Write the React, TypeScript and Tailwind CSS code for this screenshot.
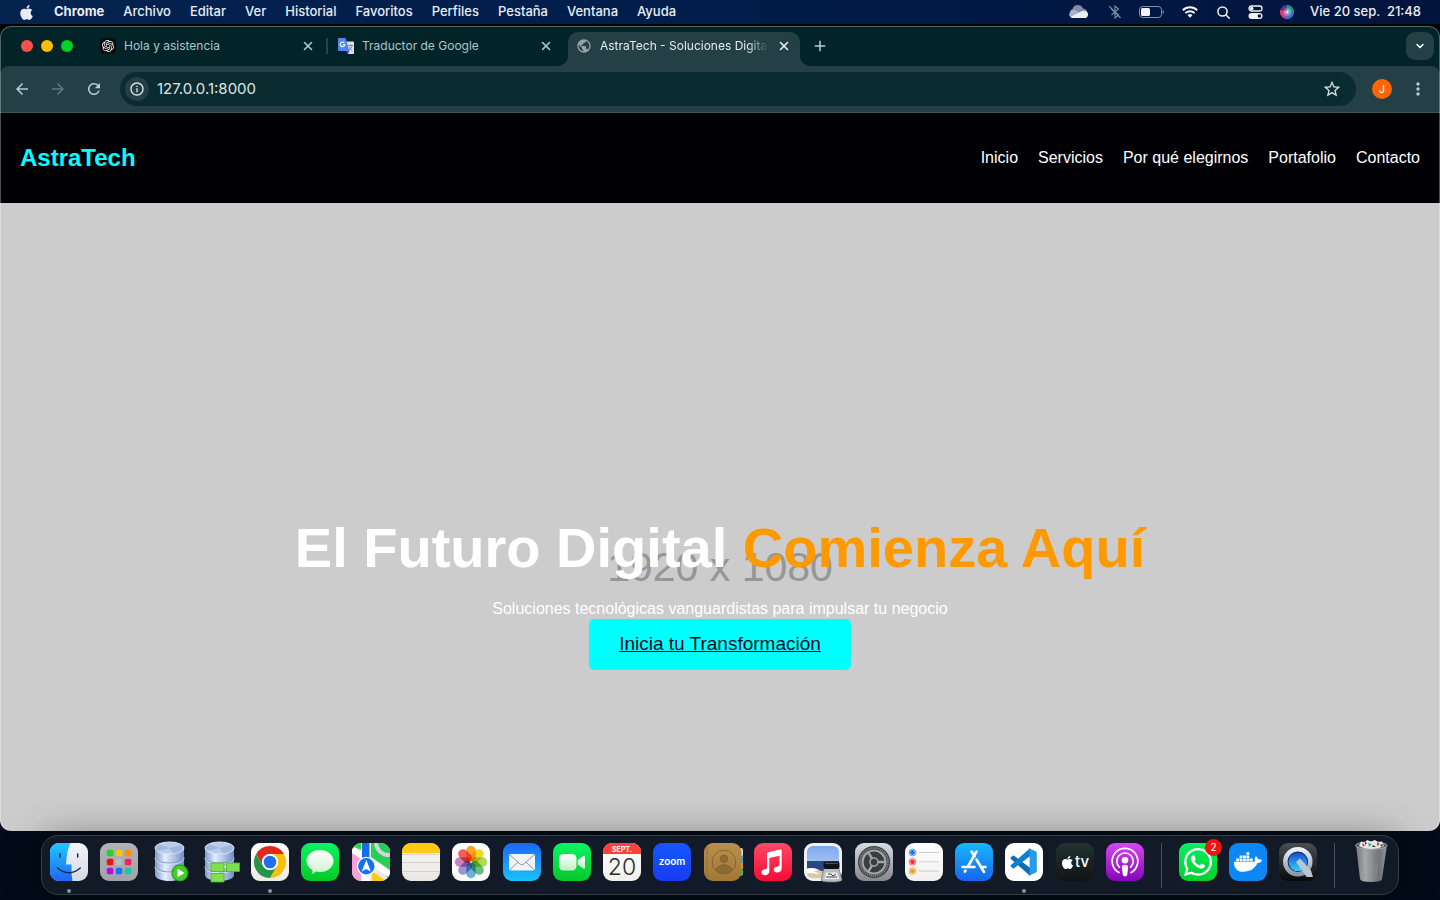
import type { ReactNode } from "react";
import { FaApple, FaDocker, FaWhatsapp } from "react-icons/fa";
import { SiOpenai } from "react-icons/si";
import { MdStarBorder, MdMoreVert, MdPublic, MdInfoOutline, MdRefresh, MdArrowBack, MdArrowForward, MdAdd } from "react-icons/md";
import { ChevronDown, X } from "lucide-react";

const menus = ["Archivo", "Editar", "Ver", "Historial", "Favoritos", "Perfiles", "Pestaña", "Ventana", "Ayuda"];
const links = ["Inicio", "Servicios", "Por qué elegirnos", "Portafolio", "Contacto"];

function MenuBar() {
  return (
    <header className="flex h-6 items-center justify-between bg-linear-to-r from-[#04234f] via-[#011c4a] to-[#02143c] pr-[19px] pl-5 text-[13px] font-medium text-[#e9edf3]">
      <div className="flex items-center gap-[19px]">
        <button aria-label="Apple" className="text-[#e9edf3]">
          <FaApple className="-ml-0.5 size-[17px]" />
        </button>
        <button className="font-bold">Chrome</button>
        {menus.map((m) => (
          <button key={m}>{m}</button>
        ))}
      </div>
      <div className="flex items-center">
        <svg viewBox="0 0 20 14" className="mr-5 h-3.5 w-5" aria-hidden="true">
          <path d="M4 11a3.6 3.6 0 0 1-.5-7A5.6 5.6 0 0 1 14 3.4 4.4 4.4 0 0 1 18 8L9 12Z" fill="#7f8ba8" />
          <path d="M1 7.5A4 4 0 0 1 5 4.800l6 3-9 4.500A3 3 0 0 1 1 7.500Z" fill="#a9b1c4" />
          <path d="M3.500 13a3 3 0 0 1-2-1l10-5.200A5 5 0 0 1 16 6a3.600 3.600 0 0 1 .5 7Z" fill="#eceef2" />
        </svg>
        <svg viewBox="0 0 12 14" className="mr-[18px] h-3.5 w-3" fill="none" stroke="#8290ab" strokeWidth="1.1" aria-hidden="true">
          <path d="m2.500 4 7 6L6 13V1l3.500 3-7 6" />
          <path d="m0 1 11.500 12" />
        </svg>
        <svg viewBox="0 0 25 12" className="mr-[18px] h-3 w-[25px]" aria-hidden="true">
          <rect x=".5" y=".5" width="22" height="11" rx="3.200" fill="none" stroke="#8290ab" />
          <rect x="2" y="2" width="9" height="8" rx="1.500" fill="#f1f3f6" />
          <path d="M23.700 4v4a2.200 2.200 0 0 0 0-4Z" fill="#8290ab" />
        </svg>
        <svg viewBox="0 0 16 12" className="mr-[19px] h-3 w-4" fill="none" stroke="#f1f3f6" strokeWidth="2" aria-hidden="true">
          <path d="M.8 4.300a10.300 10.300 0 0 1 14.400 0" />
          <path d="M3.400 7.100a6.500 6.500 0 0 1 9.200 0" />
          <path d="m8 11.800-2.400-2.500a3.400 3.400 0 0 1 4.800 0Z" fill="#f1f3f6" stroke="none" />
        </svg>
        <svg viewBox="0 0 13 13" className="mr-[18px] size-[13px]" fill="none" stroke="#f1f3f6" strokeWidth="1.500" strokeLinecap="round" aria-hidden="true">
          <circle cx="5.500" cy="5.500" r="4.600" />
          <path d="m9 9 3.300 3.300" />
        </svg>
        <svg viewBox="0 0 15 14" className="mr-[17px] h-3.5 w-[15px]" aria-hidden="true">
          <rect x="1" y="1" width="13" height="5" rx="2.500" fill="none" stroke="#f1f3f6" strokeWidth="1.300" />
          <circle cx="3.700" cy="3.500" r="1.800" fill="#f1f3f6" />
          <rect x=".5" y="8" width="14" height="6" rx="3" fill="#f1f3f6" />
          <circle cx="11.400" cy="11" r="1.800" fill="#02143c" />
        </svg>
        <svg viewBox="0 0 14 14" className="mr-4 size-3.5" aria-hidden="true">
          <defs>
            <radialGradient id="siri">
              <stop offset="0" stopColor="#fff" />
              <stop offset=".3" stopColor="#fff" stopOpacity=".5" />
              <stop offset="1" stopColor="#fff" stopOpacity="0" />
            </radialGradient>
          </defs>
          <circle cx="7" cy="7" r="7" fill="#29306a" />
          <path d="M7 7 1 3.500A7 7 0 0 1 8 0Z" fill="#503c8c" />
          <path d="M7 7 7 0a7 7 0 0 1 7 8Z" fill="#15988a" />
          <path d="M7 7 14 8A7 7 0 0 1 5 13.700Z" fill="#3d6bd0" />
          <path d="M7 7 5 13.700A7 7 0 0 1 .5 4.500Z" fill="#d93b78" />
          <circle cx="7.300" cy="7" r="5" fill="url(#siri)" />
        </svg>
        <span className="whitespace-pre">Vie 20 sep.  21:48</span>
      </div>
    </header>
  );
}

function Tab({ icon, title, active, divider }: { icon: ReactNode; title: string; active?: boolean; divider?: boolean }) {
  return (
    <div className={active ? "relative flex h-[34px] w-[232px] items-start rounded-t-[10px] bg-[#243f46] px-2 pt-1.5 text-[#e4eced]" : "relative flex h-[34px] w-[232px] items-start px-2 pt-1.5 text-[#a9c7cb]"}>
      {active && (
        <>
          <svg viewBox="0 0 10 10" className="absolute bottom-0 -left-2.5 size-2.5" aria-hidden="true">
            <path d="M10 0v10H0A10 10 0 0 0 10 0Z" fill="#243f46" />
          </svg>
          <svg viewBox="0 0 10 10" className="absolute -right-2.5 bottom-0 size-2.5" aria-hidden="true">
            <path d="M0 0v10h10A10 10 0 0 1 0 0Z" fill="#243f46" />
          </svg>
        </>
      )}
      {divider && <span className="absolute top-1.5 -right-1 h-4 w-0.5 bg-[#23444a]" />}
      <button className="flex min-w-0 flex-1 items-center gap-2 text-left text-[12px] leading-4">
        <span className="flex size-4 shrink-0 items-center justify-center">{icon}</span>
        <span className={active ? "overflow-hidden mask-r-from-88% mask-r-to-100% whitespace-nowrap" : "overflow-hidden whitespace-nowrap"}>{title}</span>
      </button>
      <button aria-label={`Cerrar ${title}`} className="ml-2 flex size-4 shrink-0 items-center justify-center">
        <X className="size-3.5" strokeWidth={2.8} />
      </button>
    </div>
  );
}

function TranslateIcon() {
  return (
    <svg viewBox="0 0 16 16" className="size-4" aria-hidden="true">
      <path d="M7 3.500h8a1 1 0 0 1 1 1V15a1 1 0 0 1-1 1H10Z" fill="#dfe2e6" />
      <path d="M8.500 13h3L10 16Z" fill="#7d3fc4" />
      <path d="M1 0h6.500l4 13H1a1 1 0 0 1-1-1V1a1 1 0 0 1 1-1Z" fill="#4d87f5" />
      <path d="M6.300 4.900A2.300 2.300 0 1 0 6.800 6.700H4.700" fill="none" stroke="#fff" strokeWidth="1.100" />
      <path d="M10 7.500h5M12.500 6.300v1.200M14 7.500c-.5 2.500-2 4-3.200 5M11 9c.8 1.800 2 3 3.500 4" fill="none" stroke="#76828c" strokeWidth=".9" />
    </svg>
  );
}

function BrowserChrome() {
  return (
    <>
      <div className="flex h-10 items-end bg-[#022428] pr-1.5 pl-[21px]">
        <div className="flex h-10 w-[71px] items-center gap-2">
          <button aria-label="Cerrar ventana" className="size-3 rounded-full bg-[#ff4f49]" />
          <button aria-label="Minimizar" className="size-3 rounded-full bg-[#ffbd00]" />
          <button aria-label="Maximizar" className="size-3 rounded-full bg-[#00d12a]" />
        </div>
        <div className="flex gap-1.5">
          <Tab title="Hola y asistencia" divider icon={<span className="flex size-4 items-center justify-center rounded bg-[#0c0c0d]"><SiOpenai className="size-3 text-white" /></span>} />
          <Tab title="Traductor de Google" icon={<TranslateIcon />} />
          <Tab title="AstraTech - Soluciones Digitales" active icon={<MdPublic className="size-4 text-[#9aa0a6]" />} />
        </div>
        <button aria-label="Nueva pestaña" className="mb-1.5 ml-1.5 flex size-7 items-center justify-center text-[#b4d0d3]">
          <MdAdd className="size-[18px]" />
        </button>
        <button aria-label="Buscar pestañas" className="mb-1.5 ml-auto flex size-7 items-center justify-center rounded-[9px] bg-[#243f46] text-white">
          <ChevronDown className="size-3" strokeWidth={3} />
        </button>
      </div>
      <div className="bg-[#022428]">
        <div className="flex h-[47px] items-center rounded-t-[9px] border-b border-[#3c555b] bg-[#243f46] px-2 text-[#b4d0d3]">
          <div className="flex gap-2">
            <button aria-label="Atrás" className="flex size-7 items-center justify-center"><MdArrowBack className="size-[18px]" /></button>
            <button aria-label="Adelante" className="flex size-7 items-center justify-center text-[#66797f]"><MdArrowForward className="size-[18px]" /></button>
            <button aria-label="Recargar" className="flex size-7 items-center justify-center"><MdRefresh className="size-[18px]" /></button>
          </div>
          <div className="mx-3 flex h-[34px] flex-1 items-center rounded-full bg-[#0a2b2f] pr-3.5 pl-[5px]">
            <button aria-label="Información del sitio" className="flex size-6 items-center justify-center rounded-full bg-[#243f46] text-[#dfe8e9]">
              <MdInfoOutline className="size-4" />
            </button>
            <input aria-label="Dirección" defaultValue="127.0.0.1:8000" className="ml-2 min-w-0 flex-1 bg-transparent text-[15px] text-[#dde6e7] outline-none" />
            <button aria-label="Añadir a favoritos" className="text-[#d6e0e1]"><MdStarBorder className="size-5" /></button>
          </div>
          <div className="flex gap-2">
            <button aria-label="Perfil" className="flex size-7 items-center justify-center">
              <span className="flex size-5 items-center justify-center rounded-full bg-[#ff6500] text-[11px] text-white">J</span>
            </button>
            <button aria-label="Más opciones" className="flex size-7 items-center justify-center"><MdMoreVert className="size-5" /></button>
          </div>
        </div>
      </div>
    </>
  );
}

function Site() {
  return (
    <div className="flex flex-1 flex-col font-['Liberation_Sans',Arial,sans-serif]">
      <div className="flex h-[90px] items-center justify-between bg-[#000005] px-5">
        <a href="#inicio" className="text-[24px] font-bold text-[#00ffff]">AstraTech</a>
        <nav className="flex gap-5 text-base text-white">
          {links.map((l) => (
            <a key={l} href="#">{l}</a>
          ))}
        </nav>
      </div>
      <main className="relative flex flex-1 flex-col items-center bg-[#cccccc] pt-[312px] text-white">
        <span aria-hidden="true" className="absolute inset-x-0 top-[340px] text-center text-[41px] leading-[48px] text-[#969696]">1920 x 1080</span>
        <h1 className="relative text-center text-[56px] leading-[66px] font-bold">
          El Futuro Digital <span className="text-[#ff9900]">Comienza Aquí</span>
        </h1>
        <p className="relative mt-[18px] text-base leading-5">Soluciones tecnológicas vanguardistas para impulsar tu negocio</p>
        <a href="#contacto" className="relative flex h-[51px] items-center rounded-[5px] bg-[#00ffff] px-[30px] text-[19px] text-[#0a0a23] underline">
          Inicia tu Transformación
        </a>
      </main>
    </div>
  );
}

const art = "block size-[38px] overflow-visible";

function Grad({ id, from, to }: { id: string; from: string; to: string }) {
  return (
    <defs>
      <linearGradient id={id} x1="0" y1="0" x2="0" y2="1">
        <stop offset="0" stopColor={from} />
        <stop offset="1" stopColor={to} />
      </linearGradient>
    </defs>
  );
}

function Tile({ id, from, to, children }: { id: string; from: string; to: string; children?: ReactNode }) {
  return (
    <svg viewBox="0 0 38 38" className={art} aria-hidden="true">
      <Grad id={id} from={from} to={to} />
      <clipPath id={`${id}-clip`}><rect width="38" height="38" rx="9" /></clipPath>
      <g clipPath={`url(#${id}-clip)`}>
        <rect width="38" height="38" fill={`url(#${id})`} />
        {children}
      </g>
    </svg>
  );
}

function Cylinder({ id }: { id: string }) {
  return (
    <>
      <defs>
        <linearGradient id={id}>
          <stop offset="0" stopColor="#7f9acb" />
          <stop offset=".35" stopColor="#e6eefb" />
          <stop offset="1" stopColor="#6f8ec6" />
        </linearGradient>
      </defs>
      <path d="M4 5v27c0 3.500 6.500 6 14.500 6S33 35.500 33 32V5Z" fill={`url(#${id})`} />
      <ellipse cx="18.500" cy="5" rx="14.500" ry="6" fill="#bccdea" stroke="#dce7f8" />
      <path d="M18.500 5 8 1.500A14 6 0 0 0 6 8ZM18.500 5l12-3a14 6 0 0 1-8 8.500Z" fill="#8da8d6" opacity=".6" />
      <path d="M4 14c0 3.500 6.500 6 14.500 6S33 17.500 33 14M4 23c0 3.500 6.500 6 14.500 6S33 26.500 33 23" fill="none" stroke="#7d98cb" strokeWidth="1" />
      <path d="M4 15.200c0 3.500 6.500 6 14.500 6S33 18.700 33 15.200M4 24.200c0 3.500 6.500 6 14.500 6S33 27.700 33 24.200" fill="none" stroke="#e6eefb" strokeWidth=".7" />
    </>
  );
}

const pads = ["#1bd62e", "#ffc400", "#ff9100", "#ee1111", "#b4bcc0", "#ff1f5c", "#b212dc", "#1374ff", "#1ac7a8"];
const petals = ["#ff9500", "#f2d500", "#a5d53c", "#4fb96b", "#54a4dc", "#8a87cf", "#c66fb5", "#f5443c"];

const apps: { name: string; running?: boolean; icon: ReactNode }[] = [
  {
    name: "Finder",
    running: true,
    icon: (
      <Tile id="finder" from="#f3f5f8" to="#d5dae3">
        <Grad id="finder-l" from="#1fc8ff" to="#1f66f5" />
        <path d="M0 0h20.500Q16.500 9 16 21.500h5.500Q21 30 22.500 38H0Z" fill="url(#finder-l)" />
        <path d="M10 11v3M27.700 11v3" stroke="#17263c" strokeWidth="1.500" strokeLinecap="round" />
        <path d="M7.500 25q11.500 9.500 22.800 0" fill="none" stroke="#17263c" strokeWidth="1.300" strokeLinecap="round" />
      </Tile>
    ),
  },
  {
    name: "Launchpad",
    icon: (
      <Tile id="launchpad" from="#b0b2b7" to="#a1a3a9">
        {pads.map((c, i) => (
          <rect key={c} x={6.800 + (i % 3) * 9} y={6.800 + Math.floor(i / 3) * 9} width="6.500" height="6.500" rx="1.500" fill={c} />
        ))}
      </Tile>
    ),
  },
  {
    name: "SQL Developer",
    icon: (
      <svg viewBox="0 0 38 38" className={art} aria-hidden="true">
        <Cylinder id="cyl-a" />
        <circle cx="29" cy="30" r="8.500" fill="#1f9d12" />
        <circle cx="29" cy="30" r="7.400" fill="#41cf22" />
        <path d="M26.500 25.800 33.500 30l-7 4.200Z" fill="#fff" />
      </svg>
    ),
  },
  {
    name: "Data Modeler",
    icon: (
      <svg viewBox="0 0 38 38" className={art} aria-hidden="true">
        <Cylinder id="cyl-b" />
        <path d="M23 24h3M16.500 28v3" stroke="#fff" strokeWidth="1.500" />
        <g fill="#7fe04d" stroke="#49b52a" strokeWidth=".8">
          <rect x="10" y="20" width="13" height="8.500" />
          <rect x="25.500" y="20" width="13" height="8.500" />
          <rect x="10" y="30.500" width="13" height="8.500" />
        </g>
      </svg>
    ),
  },
  {
    name: "Google Chrome",
    running: true,
    icon: (
      <Tile id="chrome" from="#ffffff" to="#eeeae6">
        <path d="M5.140 11A16 16 0 0 1 32.860 11H19a8 8 0 0 0-6.930 12Z" fill="#e0281c" />
        <path d="M32.860 11A16 16 0 0 1 19 35l6.930-12A8 8 0 0 0 19 11Z" fill="#fdbf0a" />
        <path d="M19 35A16 16 0 0 1 5.140 11l6.930 12a8 8 0 0 0 13.860 0Z" fill="#23964a" />
        <circle cx="19" cy="19" r="8" fill="#fff" />
        <circle cx="19" cy="19" r="6.300" fill="#216fee" />
      </Tile>
    ),
  },
  {
    name: "Mensajes",
    icon: (
      <Tile id="messages" from="#09f364" to="#05ca24">
        <Grad id="messages-b" from="#ffffff" to="#cdf3cf" />
        <path d="M19 7c7.500 0 13.500 4.900 13.500 11S26.500 29 19 29c-1.500 0-3-.2-4.300-.5-1 1.200-2.500 2-4.200 2.300.9-1 1.200-2.300.9-3.700C7.900 25 5.500 21.800 5.500 18 5.500 11.900 11.500 7 19 7Z" fill="url(#messages-b)" />
      </Tile>
    ),
  },
  {
    name: "Mapas",
    icon: (
      <Tile id="maps" from="#f4f4f2" to="#e7e7e6">
        <path d="M0 0h9v7L0 3Z" fill="#31d158" />
        <path d="M19 0h19v27L19 14Z" fill="#26cf5a" />
        <path d="M0 8 9 13v25H0Z" fill="#f6a1d5" />
        <path d="M20 28 34 38H20Z" fill="#ffc914" />
        <path d="M24 20 38 28v10Z" fill="#4cd462" />
        <path d="m0 4 38 24v7L0 10Z" fill="#fff" />
        <path d="M24 0a13 13 0 0 0 14 12" fill="none" stroke="#d2d6d8" strokeWidth="4" />
        <path d="M9 0h9v38H9Z" fill="#fff" />
        <path d="M10 0h7.500v18H10Z" fill="#126df3" />
        <circle cx="14.300" cy="23.300" r="9.500" fill="#fff" />
        <circle cx="14.300" cy="23.300" r="8.200" fill="#1272f6" />
        <path d="m14.300 17 4.500 11.500-4.500-2.500-4.500 2.500Z" fill="#fff" />
      </Tile>
    ),
  },
  {
    name: "Notas",
    icon: (
      <Tile id="notes" from="#f8f7f5" to="#e9e6e3">
        <rect width="38" height="10" fill="#ffc914" />
        <path d="M0 11.300h38" stroke="#a5a29f" strokeDasharray=".8 1" />
        <path d="M0 19.500h38M0 28.500h38" stroke="#cfccc8" strokeWidth=".8" />
      </Tile>
    ),
  },
  {
    name: "Fotos",
    icon: (
      <Tile id="photos" from="#ffffff" to="#fafafa">
        {petals.map((c, i) => (
          <rect key={c} x="14.300" y="2.800" width="9.400" height="15.500" rx="4.700" fill={c} opacity=".85" className="mix-blend-multiply" transform={`rotate(${i * 45} 19 19)`} />
        ))}
      </Tile>
    ),
  },
  {
    name: "Mail",
    icon: (
      <Tile id="mail" from="#1e66f3" to="#17c4fd">
        <rect x="6" y="11" width="26" height="16.500" rx="1.800" fill="#f1f3f5" />
        <path d="m6.800 11.800 10.600 9.500q1.600 1.200 3.200 0l10.600-9.500M6.800 26.800l8-7.500M31.200 26.800l-8-7.500" fill="none" stroke="#8b99a5" strokeWidth="1" />
      </Tile>
    ),
  },
  {
    name: "FaceTime",
    icon: (
      <Tile id="facetime" from="#0cf364" to="#04c828">
        <Grad id="facetime-b" from="#ffffff" to="#bdf0c3" />
        <rect x="6" y="11" width="17.500" height="16.500" rx="4.500" fill="url(#facetime-b)" />
        <path d="M24.800 17v4.500l5.700 4.200q1.500.6 1.500-1V14q0-1.600-1.500-1Z" fill="url(#facetime-b)" />
      </Tile>
    ),
  },
  {
    name: "Calendario",
    icon: (
      <Tile id="calendar" from="#ffffff" to="#f1efec">
        <rect width="38" height="11" fill="#f9423a" />
        <text x="19" y="9" textAnchor="middle" fontSize="7" fontWeight="700" fill="#fff">SEPT.</text>
        <text x="19" y="32" textAnchor="middle" fontSize="23" fontWeight="300" fill="#2b2b2d">20</text>
      </Tile>
    ),
  },
  {
    name: "Zoom",
    icon: (
      <Tile id="zoom" from="#1457fb" to="#173cf2">
        <text x="19" y="22" textAnchor="middle" fontSize="10" fontWeight="600" fill="#fff">zoom</text>
      </Tile>
    ),
  },
  {
    name: "Contactos",
    icon: (
      <svg viewBox="0 0 38 38" className={art} aria-hidden="true">
        <Grad id="contacts" from="#b98f4e" to="#a37835" />
        <rect x="30" y="5" width="9" height="9" rx="2" fill="#d9dadb" />
        <rect x="30" y="13" width="9" height="7" fill="#32a7dc" />
        <rect x="30" y="20" width="9" height="6" fill="#f09432" />
        <rect x="30" y="26" width="9" height="7" rx="2" fill="#43bb58" />
        <rect width="37.500" height="38" rx="9" fill="url(#contacts)" />
        <path d="M3 3v32" stroke="#8f6a30" strokeWidth=".8" />
        <g stroke="#80602d" strokeWidth=".9" fill="none">
          <circle cx="20" cy="19" r="11.800" />
          <circle cx="20" cy="15.800" r="3.800" fill="#8e6a33" />
          <path d="M11.500 27a9.500 9.500 0 0 1 17 0A11.800 11.800 0 0 1 11.500 27Z" fill="#8e6a33" />
        </g>
      </svg>
    ),
  },
  {
    name: "Música",
    icon: (
      <Tile id="music" from="#fc4a67" to="#f80b35">
        <path d="M13 10.800q0-1.300 1.300-1.600L26.200 6.500q1.500-.3 1.500 1.200v17.500c0 2.600-1.700 4-3.900 4.300-2.300.3-4-.8-4-2.700 0-2 1.500-2.900 3.600-3.300 1.500-.3 2.100-.7 2.100-2V12.700l-10.200 2.200V28c0 2.600-1.600 3.900-3.800 4.200-2.300.3-4-.8-4-2.700 0-2 1.500-2.900 3.600-3.300 1.400-.3 1.900-.7 1.900-2Z" fill="#fff" />
      </Tile>
    ),
  },
  {
    name: "Vista previa",
    icon: (
      <svg viewBox="0 0 38 38" className={art} aria-hidden="true">
        <Grad id="preview" from="#7da7ec" to="#c7dcf8" />
        <rect width="38" height="38" rx="9" fill="#f0f0f1" />
        <rect x="3" y="3" width="32" height="32" rx="6" fill="url(#preview)" />
        <path d="M3 18h32v10H3Z" fill="#27497f" />
        <path d="M3 26q6-2 12 1t10 0v8H9q-6 0-6-6Z" fill="#d9c7a5" />
        <path d="M3 25.500q7-1.500 12 1.500l-5 1 6 3-13-1Z" fill="#fff" />
        <path d="m20.500 24-3.500 13q1 2 10.500 2T38 37l-3.500-13Z" fill="#b9bdc0" stroke="#6e7377" strokeWidth=".7" />
        <path d="M22 29.500h11l2 6.500H20.500Z" fill="#f0f1f2" />
        <path d="M22 34h11M24 31h3l2 2 3-2" stroke="#3c4145" fill="none" />
        <rect x="19.500" y="18.500" width="16" height="7.500" rx="2" fill="#111214" />
        <path d="M21 20.300h13" stroke="#5b5c5f" />
      </svg>
    ),
  },
  {
    name: "Ajustes",
    icon: (
      <Tile id="settings" from="#d3dde2" to="#85878a">
        <circle cx="19" cy="19" r="16" fill="#3a3d40" />
        <circle cx="19" cy="19" r="14" fill="none" stroke="#8b8f93" strokeWidth="1.800" strokeDasharray="1.100 .9" />
        <circle cx="19" cy="19" r="11.500" fill="none" stroke="#9fa3a6" strokeWidth="2.200" />
        <circle cx="19" cy="19" r="4" fill="none" stroke="#9fa3a6" strokeWidth="1.600" />
        <path d="M23 19h8M17 22.500l-4 6.500M17 15.500 13 9" stroke="#9fa3a6" strokeWidth="2.400" />
      </Tile>
    ),
  },
  {
    name: "Recordatorios",
    icon: (
      <Tile id="reminders" from="#ffffff" to="#f1f0ef">
        {["#1474f5", "#f52d2d", "#fb9a0d"].map((c, i) => (
          <g key={c}>
            <circle cx="7.500" cy={9.500 + i * 9.300} r="3.400" fill="none" stroke={c} strokeWidth=".7" />
            <circle cx="7.500" cy={9.500 + i * 9.300} r="2.400" fill={c} />
            <path d={`M14 ${9.500 + i * 9.300}h20`} stroke="#c9c8c8" strokeWidth=".9" />
          </g>
        ))}
      </Tile>
    ),
  },
  {
    name: "App Store",
    icon: (
      <Tile id="appstore" from="#16b8fb" to="#1765ee">
        <g stroke="#fff" strokeWidth="2.600" strokeLinecap="round">
          <path d="M21.500 8.500 13 23.500M10.500 27.500l-.7 1.200M16.500 8.500l3 5M21.500 16.500l7.500 12.500M7.500 24h12M26.500 24h4" />
        </g>
      </Tile>
    ),
  },
  {
    name: "Visual Studio Code",
    running: true,
    icon: (
      <Tile id="vscode" from="#ffffff" to="#ffffff">
        <path d="m5.700 14.600 2-1.800q.7-.5 1.500 0L25 24.800v8L5.700 15.800q-.6-.6 0-1.200Z" fill="#0f6dba" />
        <path d="m5.700 23.400 2 1.800q.7.500 1.500 0L25 13.200v-8L5.700 22.200q-.6.600 0 1.200Z" fill="#0c7fd0" />
        <path d="M24.700 5.400 31 8.500q.8.400.8 1.300v18.400q0 .9-.8 1.300l-6.300 3.100q-1.200.5-2-.4 1.600.7 1.900-1.100V6.900q-.3-1.800-1.900-1.100.8-.9 2-.4Z" fill="#279bea" />
      </Tile>
    ),
  },
  {
    name: "Apple TV",
    icon: (
      <span className="flex size-[38px] items-center justify-center rounded-[9px] bg-linear-to-b from-[#23332f] to-[#111416] text-[15px] leading-4 font-medium text-white">
        <FaApple className="size-[15px]" />tv
      </span>
    ),
  },
  {
    name: "Podcasts",
    icon: (
      <Tile id="podcasts" from="#d846f5" to="#8505b9">
        <g fill="none" stroke="#fff" strokeWidth="1.700" strokeLinecap="round">
          <path d="M13 29.500a12.800 12.800 0 1 1 12 0" />
          <path d="M13.500 24.300a8.200 8.200 0 1 1 11 0" />
        </g>
        <circle cx="19" cy="17.300" r="3.300" fill="#fff" />
        <path d="M19 21.800c2 0 3.200.8 3.100 2.600l-.8 7.200q-.3 2-2.300 2t-2.300-2l-.8-7.200c-.1-1.800 1.100-2.600 3.100-2.600Z" fill="#fff" />
      </Tile>
    ),
  },
];

const extras: { name: string; badge?: string; icon: ReactNode }[] = [
  {
    name: "WhatsApp",
    badge: "2",
    icon: (
      <span className="flex size-[38px] items-center justify-center rounded-[9px] bg-linear-to-b from-[#05f062] to-[#05cf2a] text-white">
        <FaWhatsapp className="size-8" />
      </span>
    ),
  },
  {
    name: "Docker",
    icon: (
      <span className="flex size-[38px] items-center justify-center rounded-[9px] bg-[#0b87f7] text-white">
        <FaDocker className="size-7" />
      </span>
    ),
  },
  {
    name: "QuickTime Player",
    icon: (
      <Tile id="quicktime" from="#4a4d52" to="#08090a">
        <Grad id="qt-ring" from="#e9eff8" to="#8c97a8" />
        <Grad id="qt-core" from="#1849cf" to="#2fd3fb" />
        <circle cx="18.800" cy="18.800" r="12.500" fill="#142a5c" stroke="url(#qt-ring)" strokeWidth="4.500" />
        <circle cx="18.800" cy="18.800" r="9.300" fill="url(#qt-core)" />
        <path d="m17 19 4-3.500L32 27.500 34 34h-6.500Z" fill="#bac4d2" />
      </Tile>
    ),
  },
];

function TrashIcon() {
  return (
    <svg viewBox="0 0 38 38" className={art} aria-hidden="true">
      <defs>
        <linearGradient id="trash">
          <stop offset="0" stopColor="#777a7d" />
          <stop offset=".3" stopColor="#a4a7a9" />
          <stop offset=".75" stopColor="#707376" />
          <stop offset="1" stopColor="#96999c" />
        </linearGradient>
      </defs>
      <path d="M4 2 8 36q.4 3 11 3t11-3L35 2Z" fill="url(#trash)" />
      <ellipse cx="19.300" cy="2.500" rx="15.800" ry="3.800" fill="#55585b" stroke="#b3b6b8" strokeWidth=".8" />
      <path d="m7 3 2-4.500 4 1L15-3l4 1.500L23-3l3 2 4-.5 2 4.500q-5 3-13 3T7 3Z" fill="#e6e7e8" />
      <path d="m10 0 3 2-2 2ZM25-1l3 2-3 2Z" fill="#c6463c" />
      <path d="m16 0 4 1-3 3Z" fill="#3fb0a0" />
      <path d="m21 2 3 2h-4ZM13-1l2 1-2 2ZM28 2l3-1-1 3Z" fill="#34383c" />
      <path d="M12 12l2 18M20 14l-1 18M27 11l-3 21" stroke="#c3c5c7" strokeWidth=".7" opacity=".2" />
    </svg>
  );
}

function Dock() {
  return (
    <footer className="relative mx-[41px] mt-1 mb-[5px] flex h-[60px] items-start gap-[17px] rounded-[17px] border border-[#333d48] bg-[#111a26] px-2 pt-[7px] shadow-[0_0_36px_rgba(0,0,0,0.35)]">
      <div className="flex flex-1 justify-between">
        {apps.map((a) => (
          <button key={a.name} aria-label={a.name} className="flex size-[38px] flex-col items-center">
            {a.icon}
            {a.running && <span className="mt-2 size-1 shrink-0 rounded-full bg-[#8b93a0]" />}
          </button>
        ))}
      </div>
      <span className="h-[45px] w-px bg-[#46505a]" />
      <div className="flex gap-3">
        {extras.map((a) => (
          <button key={a.name} aria-label={a.name} className="relative">
            {a.icon}
            {a.badge && <span className="absolute -top-1 -right-[5px] flex size-[17px] items-center justify-center rounded-full bg-[#ee1414] text-[10px] text-white">{a.badge}</span>}
          </button>
        ))}
      </div>
      <span className="h-[45px] w-px bg-[#46505a]" />
      <button aria-label="Papelera">
        <TrashIcon />
      </button>
    </footer>
  );
}

export default function App() {
  return (
    <div className="flex min-h-screen flex-col bg-[#020b17] font-[Inter,'Liberation_Sans',sans-serif]">
      <MenuBar />
      <div className="flex flex-1 flex-col bg-linear-to-b from-black from-90% to-transparent pt-0.5">
        <div className="relative flex flex-1 flex-col overflow-hidden rounded-[11px]">
          <BrowserChrome />
          <Site />
          <span className="pointer-events-none absolute inset-0 rounded-[11px] border border-white/30 border-b-transparent" />
        </div>
      </div>
      <Dock />
    </div>
  );
}
